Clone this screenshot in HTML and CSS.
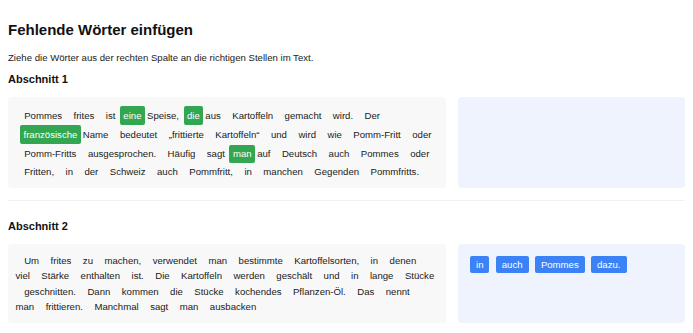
FILE: index.html
```html
<!DOCTYPE html>
<html lang="de">
  <head>
    <meta charset="UTF-8" />
    <meta name="viewport" content="width=device-width, initial-scale=1" />
    <title>Fehlende Wörter einfügen</title>
    <link rel="stylesheet" href="styles.css">
  </head>
  <body>
    <div class="page">
      <h1>Fehlende Wörter einfügen</h1>
      <p class="lead">Ziehe die Wörter aus der rechten Spalte an die richtigen Stellen im Text.</p>

      <section class="part">
        <h3>Abschnitt 1</h3>
        <div class="exercise">
          <p class="text">
            <span class="gap"></span>Pommes frites ist<span class="slot">eine</span>Speise,<span class="slot">die</span>aus Kartoffeln gemacht wird. Der<br>
            <span class="slot">französische</span>Name bedeutet „frittierte Kartoffeln“ und wird wie Pomm-Fritt oder<br>
            <span class="gap"></span>Pomm-Fritts ausgesprochen. Häufig sagt<span class="slot">man</span>auf Deutsch auch Pommes oder<br>
            <span class="gap"></span>Fritten, in der Schweiz auch Pommfritt, in manchen Gegenden Pommfritts.
          </p>
          <div class="bank"></div>
        </div>
      </section>

      <section class="part">
        <h3>Abschnitt 2</h3>
        <div class="exercise">
          <p class="text">
            <span class="gap"></span>Um<span class="drop"></span> frites zu machen, verwendet man bestimmte Kartoffelsorten, in denen<br>
            viel Stärke enthalten ist. Die Kartoffeln werden geschält und in lange Stücke<br>
            <span class="gap"></span>geschnitten. Dann kommen die Stücke<span class="drop"></span> kochendes Pflanzen-Öl. Das nennt<br>
            man frittieren. Manchmal sagt man<span class="drop"></span> ausbacken<span class="drop"></span>
          </p>
          <div class="bank">
            <span class="chip">in</span>
            <span class="chip">auch</span>
            <span class="chip">Pommes</span>
            <span class="chip">dazu.</span>
          </div>
        </div>
      </section>
    </div>
  </body>
</html>
```

FILE: styles.css
```css
body {
  font-family: "Liberation Sans", Arial, sans-serif;
  background: #fff;
  color: #1a1a1a;
  margin: 0;
  padding: 0;
}
.page {
  padding: 0 8px 20px 8px;
}
h1 {
  font-size: 15px;
  font-weight: bold;
  color: #111;
  margin: 21px 0 0 0;
  line-height: normal;
}
.lead {
  font-size: 9.6px;
  margin: 14px 0 10px 0;
  line-height: normal;
}
h3 {
  font-size: 11px;
  font-weight: bold;
  color: #111;
  margin: 0 0 12px 0;
  line-height: normal;
}
.part + .part {
  margin-top: 12px;
  padding-top: 19px;
  border-top: 1px solid #f1f1f1;
}
.exercise {
  display: grid;
  grid-template-columns: 1fr 227px;
  gap: 12px;
}
.text {
  margin: 0;
  background: #f8f8f8;
  border-radius: 4px;
  padding: 9px 8px 9px 7.5px;
  font-size: 9.6px;
  line-height: 1.6;
  word-spacing: 8.8px;
  white-space: nowrap;
  color: #1a1a1a;
}
.gap {
  display: inline-block;
  width: 8.7px;
}
.slot {
  display: inline-block;
  background: #33a652;
  color: #fff;
  line-height: normal;
  padding: 3.8px 3.5px;
  margin: 0.3px 2px 0.3px 4.5px;
  border-radius: 2px;
  word-spacing: normal;
}
.bank {
  background: #eef3fe;
  border-radius: 4px;
  padding: 12px;
  display: flex;
  flex-wrap: wrap;
  align-content: flex-start;
  gap: 6.3px;
}
.chip {
  background: #3b82f6;
  color: #fff;
  font-size: 9.6px;
  line-height: normal;
  padding: 3.1px 6px;
  border-radius: 2px;
}
```
